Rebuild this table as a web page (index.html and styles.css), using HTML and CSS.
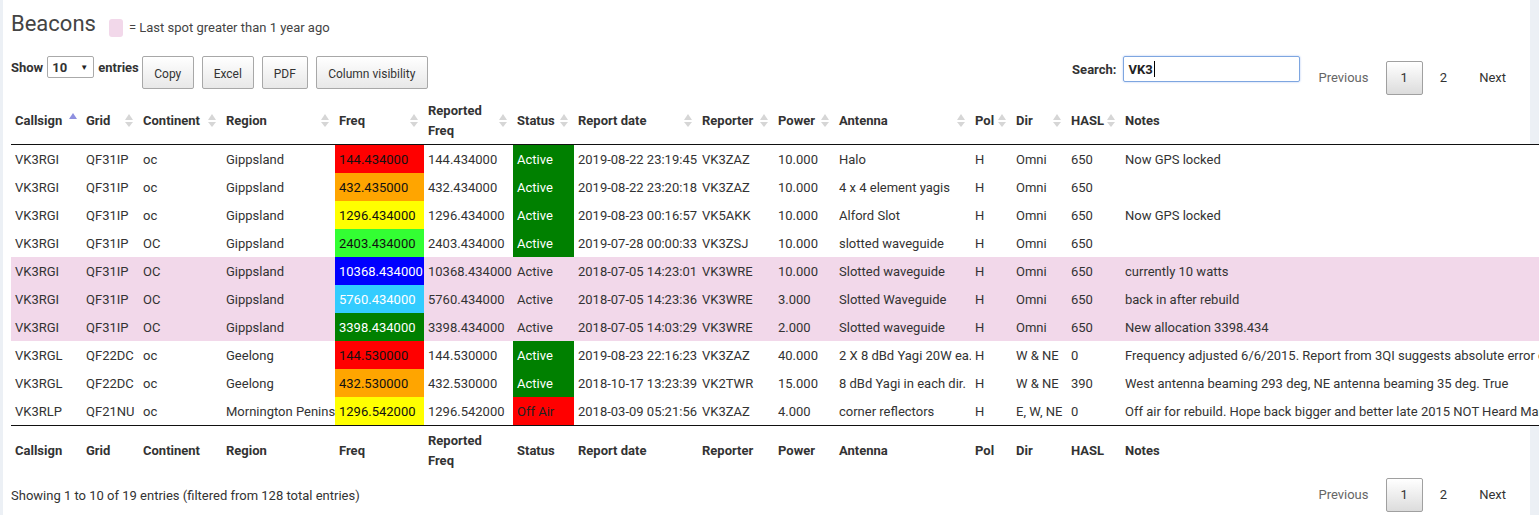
FILE: index.html
```html
<!DOCTYPE html>
<html lang="en">
<head>
<meta charset="utf-8">
<title>Beacons</title>
<link rel="stylesheet" href="styles.css">
</head>
<body>
<div class="page">
  <div class="title-row">
    <h1 class="title">Beacons</h1>
    <span class="legend-swatch"></span>
    <span class="legend-text">= Last spot greater than 1 year ago</span>
  </div>

  <div class="toolbar">
    <div class="toolbar-left">
      <div class="length">
        <span>Show</span>
        <span class="select"><span class="select-val">10</span><span class="select-arrow">▼</span></span>
        <span>entries</span>
      </div>
      <div class="buttons">
        <button class="btn btn-copy">Copy</button>
        <button class="btn btn-excel">Excel</button>
        <button class="btn btn-pdf">PDF</button>
        <button class="btn btn-colvis">Column visibility</button>
      </div>
    </div>
    <div class="toolbar-right">
      <div class="filter">
        <span class="filter-label">Search:</span>
        <div class="search-input"><span class="search-val">VK3</span><span class="caret"></span></div>
      </div>
      <div class="paginate paginate-top">
        <span class="pg pg-disabled">Previous</span>
        <span class="pg pg-current">1</span>
        <span class="pg">2</span>
        <span class="pg">Next</span>
      </div>
    </div>
  </div>

  <table class="beacons">
    <colgroup>
      <col class="w-call"><col class="w-grid"><col class="w-cont"><col class="w-region">
      <col class="w-freq"><col class="w-rfreq"><col class="w-status"><col class="w-date">
      <col class="w-rep"><col class="w-power"><col class="w-ant"><col class="w-pol">
      <col class="w-dir"><col class="w-hasl"><col class="w-notes">
    </colgroup>
    <thead>
      <tr>
        <th class="sort-asc">Callsign</th>
        <th class="sort">Grid</th>
        <th class="sort">Continent</th>
        <th class="sort">Region</th>
        <th class="sort">Freq</th>
        <th class="sort">Reported<br>Freq</th>
        <th class="sort">Status</th>
        <th class="sort">Report date</th>
        <th class="sort">Reporter</th>
        <th class="sort">Power</th>
        <th class="sort">Antenna</th>
        <th class="sort">Pol</th>
        <th class="sort">Dir</th>
        <th class="sort">HASL</th>
        <th>Notes</th>
      </tr>
    </thead>
    <tbody>
      <tr>
        <td>VK3RGI</td><td>QF31IP</td><td>oc</td><td>Gippsland</td>
        <td class="freq f-red">144.434000</td><td>144.434000</td><td class="st-active">Active</td>
        <td>2019-08-22 23:19:45</td><td>VK3ZAZ</td><td>10.000</td><td>Halo</td><td>H</td><td>Omni</td><td>650</td><td>Now GPS locked</td>
      </tr>
      <tr>
        <td>VK3RGI</td><td>QF31IP</td><td>oc</td><td>Gippsland</td>
        <td class="freq f-orange">432.435000</td><td>432.434000</td><td class="st-active">Active</td>
        <td>2019-08-22 23:20:18</td><td>VK3ZAZ</td><td>10.000</td><td>4 x 4 element yagis</td><td>H</td><td>Omni</td><td>650</td><td></td>
      </tr>
      <tr>
        <td>VK3RGI</td><td>QF31IP</td><td>oc</td><td>Gippsland</td>
        <td class="freq f-yellow">1296.434000</td><td>1296.434000</td><td class="st-active">Active</td>
        <td>2019-08-23 00:16:57</td><td>VK5AKK</td><td>10.000</td><td>Alford Slot</td><td>H</td><td>Omni</td><td>650</td><td>Now GPS locked</td>
      </tr>
      <tr>
        <td>VK3RGI</td><td>QF31IP</td><td>OC</td><td>Gippsland</td>
        <td class="freq f-lime">2403.434000</td><td>2403.434000</td><td class="st-active">Active</td>
        <td>2019-07-28 00:00:33</td><td>VK3ZSJ</td><td>10.000</td><td>slotted waveguide</td><td>H</td><td>Omni</td><td>650</td><td></td>
      </tr>
      <tr class="stale">
        <td>VK3RGI</td><td>QF31IP</td><td>OC</td><td>Gippsland</td>
        <td class="freq f-blue">10368.434000</td><td>10368.434000</td><td>Active</td>
        <td>2018-07-05 14:23:01</td><td>VK3WRE</td><td>10.000</td><td>Slotted waveguide</td><td>H</td><td>Omni</td><td>650</td><td>currently 10 watts</td>
      </tr>
      <tr class="stale">
        <td>VK3RGI</td><td>QF31IP</td><td>OC</td><td>Gippsland</td>
        <td class="freq f-sky">5760.434000</td><td>5760.434000</td><td>Active</td>
        <td>2018-07-05 14:23:36</td><td>VK3WRE</td><td>3.000</td><td>Slotted Waveguide</td><td>H</td><td>Omni</td><td>650</td><td>back in after rebuild</td>
      </tr>
      <tr class="stale">
        <td>VK3RGI</td><td>QF31IP</td><td>OC</td><td>Gippsland</td>
        <td class="freq f-green">3398.434000</td><td>3398.434000</td><td>Active</td>
        <td>2018-07-05 14:03:29</td><td>VK3WRE</td><td>2.000</td><td>Slotted waveguide</td><td>H</td><td>Omni</td><td>650</td><td>New allocation 3398.434</td>
      </tr>
      <tr>
        <td>VK3RGL</td><td>QF22DC</td><td>oc</td><td>Geelong</td>
        <td class="freq f-red">144.530000</td><td>144.530000</td><td class="st-active">Active</td>
        <td>2019-08-23 22:16:23</td><td>VK3ZAZ</td><td>40.000</td><td>2 X 8 dBd Yagi 20W ea.</td><td>H</td><td>W &amp; NE</td><td>0</td><td>Frequency adjusted 6/6/2015. Report from 3QI suggests absolute error of 1 kHz</td>
      </tr>
      <tr>
        <td>VK3RGL</td><td>QF22DC</td><td>oc</td><td>Geelong</td>
        <td class="freq f-orange">432.530000</td><td>432.530000</td><td class="st-active">Active</td>
        <td>2018-10-17 13:23:39</td><td>VK2TWR</td><td>15.000</td><td>8 dBd Yagi in each dir.</td><td>H</td><td>W &amp; NE</td><td>390</td><td>West antenna beaming 293 deg, NE antenna beaming 35 deg. True</td>
      </tr>
      <tr>
        <td>VK3RLP</td><td>QF21NU</td><td>oc</td><td>Mornington Peninsula</td>
        <td class="freq f-yellow">1296.542000</td><td>1296.542000</td><td class="st-off">Off Air</td>
        <td>2018-03-09 05:21:56</td><td>VK3ZAZ</td><td>4.000</td><td>corner reflectors</td><td>H</td><td>E, W, NE</td><td>0</td><td>Off air for rebuild. Hope back bigger and better late 2015 NOT Heard March 2016</td>
      </tr>
    </tbody>
    <tfoot>
      <tr>
        <th>Callsign</th><th>Grid</th><th>Continent</th><th>Region</th><th>Freq</th>
        <th>Reported<br>Freq</th><th>Status</th><th>Report date</th><th>Reporter</th><th>Power</th>
        <th>Antenna</th><th>Pol</th><th>Dir</th><th>HASL</th><th>Notes</th>
      </tr>
    </tfoot>
  </table>

  <div class="footer">
    <div class="info">Showing 1 to 10 of 19 entries (filtered from 128 total entries)</div>
    <div class="paginate">
      <span class="pg pg-disabled">Previous</span>
      <span class="pg pg-current">1</span>
      <span class="pg">2</span>
      <span class="pg">Next</span>
    </div>
  </div>
</div>
</body>
</html>
```

FILE: styles.css
```css
html, body {
  margin: 0;
  padding: 0;
  overflow: hidden;
}
body {
  background: #ecf0f5;
  font-family: Roboto, "Liberation Sans", sans-serif;
  font-size: 13px;
  color: #333;
}
.page {
  margin-left: 3px;
  width: 1510px;
  min-height: 515px;
  padding: 0 9px 0 8px;
  background: #fff;
}

/* title */
.title-row {
  display: flex;
  align-items: center;
  height: 30px;
  padding-top: 9px;
}
.title {
  margin: 0;
  font-size: 22px;
  font-weight: 400;
  line-height: 30px;
  color: #444;
}
.legend-swatch {
  width: 14px;
  height: 18px;
  margin-left: 13px;
  margin-top: 8px;
  border-radius: 3px;
  background: #f2d8ea;
}
.legend-text {
  margin-left: 6px;
  margin-top: 6px;
  font-size: 13px;
  color: #444;
}

/* toolbar */
.toolbar {
  display: flex;
  justify-content: space-between;
  align-items: flex-start;
  margin-top: 17px;
}
.toolbar-left {
  display: flex;
  align-items: flex-start;
}
.length {
  display: flex;
  align-items: center;
  height: 22px;
  font-weight: 700;
}
.select {
  display: flex;
  align-items: center;
  justify-content: space-between;
  box-sizing: border-box;
  width: 47px;
  height: 22px;
  margin: 0 4px 0 4px;
  padding: 0 5px 0 4px;
  border: 1px solid #aaa;
  border-radius: 2px;
  font-weight: 700;
}
.select-arrow {
  font-size: 8px;
  color: #222;
}
.buttons {
  display: flex;
  gap: 8px;
  margin-left: 3px;
}
.btn {
  box-sizing: border-box;
  height: 33px;
  padding: 2px 0 0;
  border: 1px solid #a8a8a8;
  border-radius: 2px;
  background: linear-gradient(to bottom, #ffffff 0%, #e8e8e8 100%);
  font-family: Roboto, "Liberation Sans", sans-serif;
  font-size: 12px;
  color: #333;
}
.btn-copy { width: 52px; }
.btn-excel { width: 52px; }
.btn-pdf { width: 46px; }
.btn-colvis { width: 112px; }

.toolbar-right {
  display: flex;
  align-items: flex-start;
}
.filter {
  display: flex;
  align-items: center;
  height: 26px;
}
.filter-label {
  font-weight: 700;
  margin-right: 7px;
}
.search-input {
  display: flex;
  align-items: center;
  box-sizing: border-box;
  width: 177px;
  height: 26px;
  padding-left: 4px;
  border: 1px solid #7ea6e0;
  border-radius: 2px;
  box-shadow: 0 0 2px rgba(102, 150, 233, 0.6);
  font-weight: 700;
  color: #222;
}
.caret {
  width: 1px;
  height: 16px;
  margin-left: 1px;
  background: #000;
}

/* pagination */
.paginate {
  display: flex;
  align-items: center;
}
.paginate-top {
  margin-left: 1px;
  margin-top: 5px;
}
.pg {
  box-sizing: border-box;
  min-width: 35px;
  height: 34px;
  padding: 0 14px;
  margin-left: 2px;
  border: 1px solid transparent;
  border-radius: 2px;
  line-height: 32px;
  text-align: center;
  color: #333;
}
.pg-disabled {
  color: #666;
}
.pg-current {
  border-color: #a0a0a0;
  background: linear-gradient(to bottom, #ffffff 0%, #dcdcdc 100%);
}

/* table */
.beacons {
  table-layout: fixed;
  width: 1810px;
  margin-top: 1px;
  border-collapse: collapse;
  border-spacing: 0;
}
.w-call { width: 71px; }
.w-grid { width: 57px; }
.w-cont { width: 83px; }
.w-region { width: 113px; }
.w-freq { width: 89px; }
.w-rfreq { width: 89px; }
.w-status { width: 61px; }
.w-date { width: 124px; }
.w-rep { width: 76px; }
.w-power { width: 61px; }
.w-ant { width: 136px; }
.w-pol { width: 41px; }
.w-dir { width: 55px; }
.w-hasl { width: 54px; }
.w-notes { width: 700px; }

.beacons th {
  position: relative;
  padding: 5px 4px 3px 4px;
  line-height: 20px;
  height: 40px;
  text-align: left;
  vertical-align: middle;
  font-weight: 700;
  white-space: nowrap;
  color: #333;
}
.beacons thead th {
  border-bottom: 1px solid #111;
}
.beacons tfoot th {
  border-top: 1px solid #111;
}
.beacons td {
  padding: 5px 2px 3px 4px;
  line-height: 20px;
  white-space: nowrap;
  overflow: hidden;
}
.beacons tbody tr {
  background: #fff;
}
.beacons tbody tr.stale {
  background: #f2d8ea;
}

/* sort icons */
.sort::before,
.sort::after,
.sort-asc::before {
  content: "";
  position: absolute;
  right: 6px;
  width: 0;
  height: 0;
  border-left: 4px solid transparent;
  border-right: 4px solid transparent;
}
.sort::before {
  top: 18px;
  border-bottom: 6px solid #d6d6d6;
}
.sort::after {
  top: 26px;
  border-top: 5px solid #d6d6d6;
}
.sort-asc::before {
  top: 17px;
  right: 5px;
  border-left-width: 4.5px;
  border-right-width: 4.5px;
  border-bottom: 6px solid #8f90e0;
}

/* coloured cells */
.freq { padding-right: 0; color: #111; }
.f-red { background: #ff0000; }
.f-orange { background: #ffa500; }
.f-yellow { background: #ffff00; }
.f-lime { background: #33ff33; }
.f-blue { background: #0000ff; color: #fff; }
.f-sky { background: #33ccff; color: #fff; }
.f-green { background: #008000; color: #fff; }
.st-active { background: #008000; color: #fff; }
.st-off { background: #ff0000; color: #222; }

/* footer */
.footer {
  display: flex;
  justify-content: space-between;
  align-items: center;
  margin-top: 4px;
}
.info {
  font-size: 13px;
  color: #333;
}
```
